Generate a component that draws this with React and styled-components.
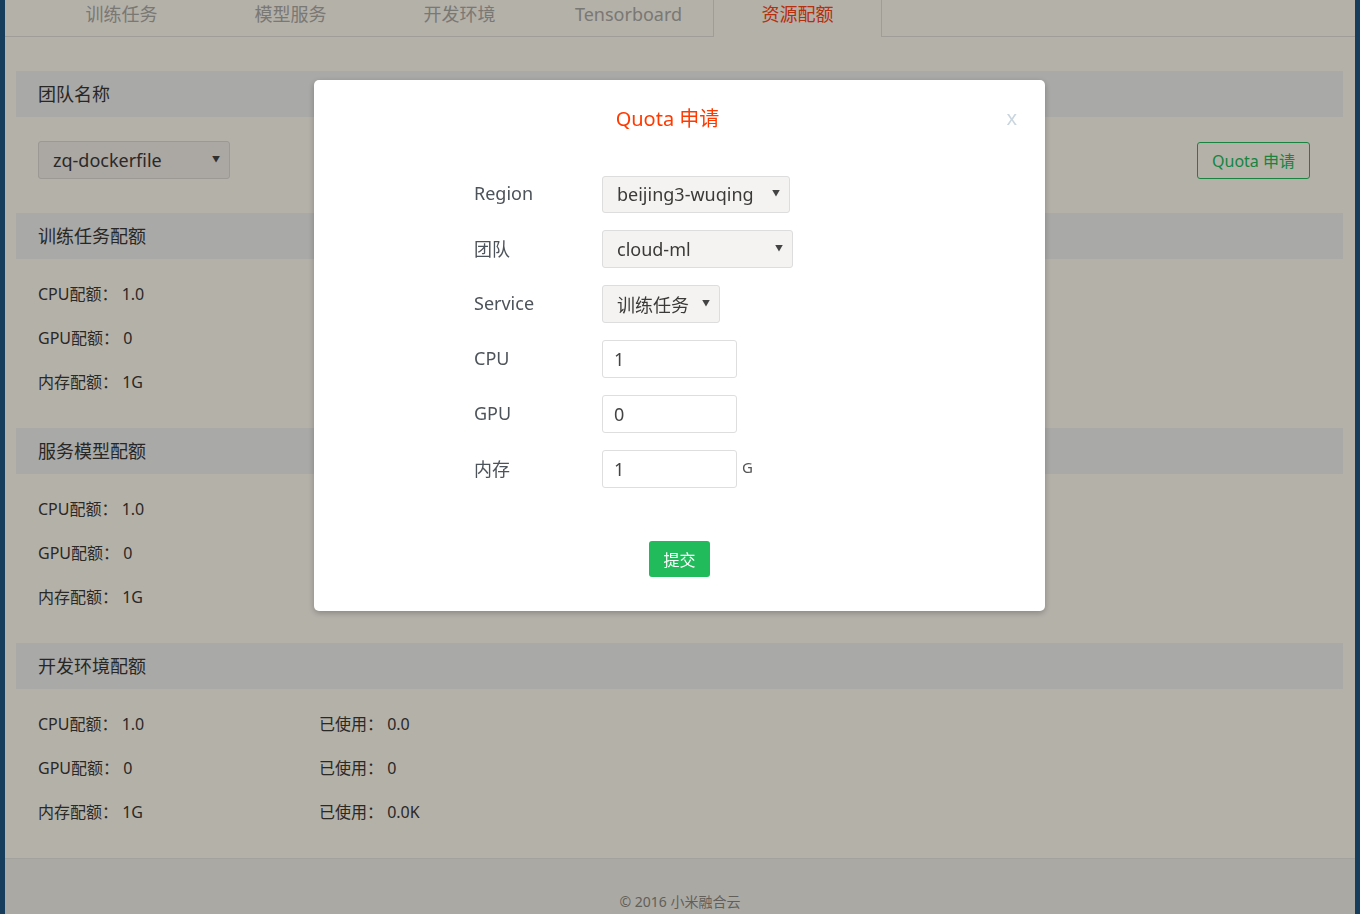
import React from 'react';
import styled, { createGlobalStyle } from 'styled-components';

const GlobalStyle = createGlobalStyle`
    html, body {
        margin: 0;
        padding: 0;
        height: 100%;
        overflow: hidden;
    }
    body {
        font-family: "Noto Sans", "Noto Sans CJK SC", sans-serif;
        background: #1f5782;
    }
`;

const SPage = styled.div`
    margin: 0 5px;
    height: 914px;
    background: #fef9ef;
    display: flex;
    flex-direction: column;
    overflow: hidden;
`;

const STabs = styled.ul`
    list-style: none;
    margin: 0;
    padding: 0 0 0 32px;
    height: 36px;
    border-bottom: 1px solid #e2ded6;
    display: flex;
`;

const STab = styled.li`
    width: 169px;
    height: ${props => (props.active ? '37px' : '36px')};
    box-sizing: border-box;
    text-align: center;
    font-size: 18px;
    line-height: 28px;
    color: ${props => (props.active ? '#ff4410' : '#aca9a3')};
    border-left: 1px solid ${props => (props.active ? '#e2ded6' : 'transparent')};
    border-right: 1px solid ${props => (props.active ? '#e2ded6' : 'transparent')};
    background: ${props => (props.active ? '#fef9ef' : 'transparent')};
`;

const SContent = styled.div`
    padding: 34px 12px 0 11px;
`;

const SSectionHead = styled.div`
    height: 46px;
    background: #eeeeec;
    padding-left: 22px;
    font-size: 18px;
    line-height: 46px;
    color: #3a3835;
`;

const STeamRow = styled.div`
    display: flex;
    justify-content: space-between;
    align-items: center;
    padding: 24px 33px 34px 22px;
`;

const SSelect = styled.div`
    width: ${props => props.w}px;
    height: ${props => props.h || 38}px;
    box-sizing: border-box;
    border: 1px solid ${props => props.border || '#dcd6d0'};
    border-radius: 3px;
    background: ${props => props.bg || '#f1ebe6'};
    display: flex;
    align-items: center;
    justify-content: space-between;
    padding: 0 9px 0 14px;
    font-size: 18px;
    color: #3c3a38;
`;

const SCaret = styled.span`
    font-size: 8px;
    color: #444;
    margin-top: -3px;
`;

const SOutlineBtn = styled.button`
    width: 113px;
    height: 37px;
    border: 1px solid #22bb5b;
    border-radius: 3px;
    background: transparent;
    color: #22bb5b;
    font-family: inherit;
    font-size: 16px;
    padding: 0;
`;

const SList = styled.div`
    padding: 12px 0 25px 22px;
`;

const SRow = styled.div`
    height: 44px;
    display: flex;
    align-items: center;
    font-size: 16px;
    color: #3c3a36;
`;

const SCell = styled.span`
    width: 281px;
`;

const SFooter = styled.footer`
    border-top: 1px solid #e6e4dd;
    background: #f1efe8;
    flex: 1;
    text-align: center;
    padding-top: 32px;
    font-size: 14px;
    color: #8a8780;
`;

const SBackdrop = styled.div`
    position: fixed;
    inset: 0;
    background: rgba(0, 0, 0, 0.29);
`;

const SModal = styled.div`
    position: fixed;
    top: 80px;
    left: 314px;
    width: 731px;
    height: 531px;
    background: #fff;
    border-radius: 5px;
    box-shadow: 0 2px 6px rgba(0, 0, 0, 0.25);
    box-sizing: border-box;
    padding-top: 26px;
`;

const STitle = styled.h3`
    margin: 0;
    padding-right: 24px;
    text-align: center;
    font-size: 20px;
    font-weight: normal;
    line-height: 26px;
    color: #ff3a00;
`;

const SClose = styled.span`
    position: absolute;
    top: 24px;
    right: 28px;
    font-size: 20px;
    color: #c9d5df;
`;

const SForm = styled.div`
    padding: 43px 0 0 160px;
    display: flex;
    flex-direction: column;
    gap: 17px;
`;

const SFormRow = styled.div`
    display: flex;
    align-items: center;
    height: 38px;
`;

const SLabel = styled.label`
    width: 128px;
    font-size: 18px;
    color: #4d535a;
    margin-top: -2px;
`;

const SInput = styled.input`
    width: 135px;
    height: 38px;
    box-sizing: border-box;
    border: 1px solid #dedede;
    border-radius: 3px;
    padding: 0 11px;
    font-family: inherit;
    font-size: 18px;
    color: #444;
    outline: none;
`;

const SUnit = styled.span`
    margin-left: 5px;
    font-size: 15px;
    color: #555;
    margin-top: -4px;
`;

const SSubmit = styled.button`
    display: block;
    margin: 53px auto 0;
    width: 61px;
    height: 36px;
    border: none;
    border-radius: 3px;
    background: #22bb5b;
    color: #fff;
    font-family: inherit;
    font-size: 16px;
    padding: 0;
`;

const tabs = ['训练任务', '模型服务', '开发环境', 'Tensorboard', '资源配额'];

const quotas = [
    { title: '训练任务配额' },
    { title: '服务模型配额' },
    { title: '开发环境配额', used: ['0.0', '0', '0.0K'] },
];

const Quota = ({ title, used }) => (
    <>
        <SSectionHead>{title}</SSectionHead>
        <SList>
            {[['CPU配额：', '1.0'], ['GPU配额：', '0'], ['内存配额：', '1G']].map(([k, v], i) => (
                <SRow key={k}>
                    <SCell>{k} {v}</SCell>
                    {used && <span>已使用： {used[i]}</span>}
                </SRow>
            ))}
        </SList>
    </>
);

const App = () => (
    <>
        <GlobalStyle />
        <SPage>
            <STabs>
                {tabs.map(t => (
                    <STab key={t} active={t === '资源配额' ? 1 : 0}>{t}</STab>
                ))}
            </STabs>
            <SContent>
                <SSectionHead>团队名称</SSectionHead>
                <STeamRow>
                    <SSelect w={192}>
                        zq-dockerfile <SCaret>▼</SCaret>
                    </SSelect>
                    <SOutlineBtn>Quota 申请</SOutlineBtn>
                </STeamRow>
                {quotas.map(q => (
                    <Quota key={q.title} {...q} />
                ))}
            </SContent>
            <SFooter>© 2016 小米融合云</SFooter>
        </SPage>
        <SBackdrop />
        <SModal>
            <STitle>Quota 申请</STitle>
            <SClose>x</SClose>
            <SForm>
                <SFormRow>
                    <SLabel>Region</SLabel>
                    <SSelect w={188} h={37} bg="#f4f3f1" border="#dddddd">
                        beijing3-wuqing <SCaret>▼</SCaret>
                    </SSelect>
                </SFormRow>
                <SFormRow>
                    <SLabel>团队</SLabel>
                    <SSelect w={191} bg="#f4f3f1" border="#dddddd">
                        cloud-ml <SCaret>▼</SCaret>
                    </SSelect>
                </SFormRow>
                <SFormRow>
                    <SLabel>Service</SLabel>
                    <SSelect w={118} bg="#f4f3f1" border="#dddddd">
                        训练任务 <SCaret>▼</SCaret>
                    </SSelect>
                </SFormRow>
                <SFormRow>
                    <SLabel>CPU</SLabel>
                    <SInput defaultValue="1" />
                </SFormRow>
                <SFormRow>
                    <SLabel>GPU</SLabel>
                    <SInput defaultValue="0" />
                </SFormRow>
                <SFormRow>
                    <SLabel>内存</SLabel>
                    <SInput defaultValue="1" />
                    <SUnit>G</SUnit>
                </SFormRow>
            </SForm>
            <SSubmit>提交</SSubmit>
        </SModal>
    </>
);

export default App;
